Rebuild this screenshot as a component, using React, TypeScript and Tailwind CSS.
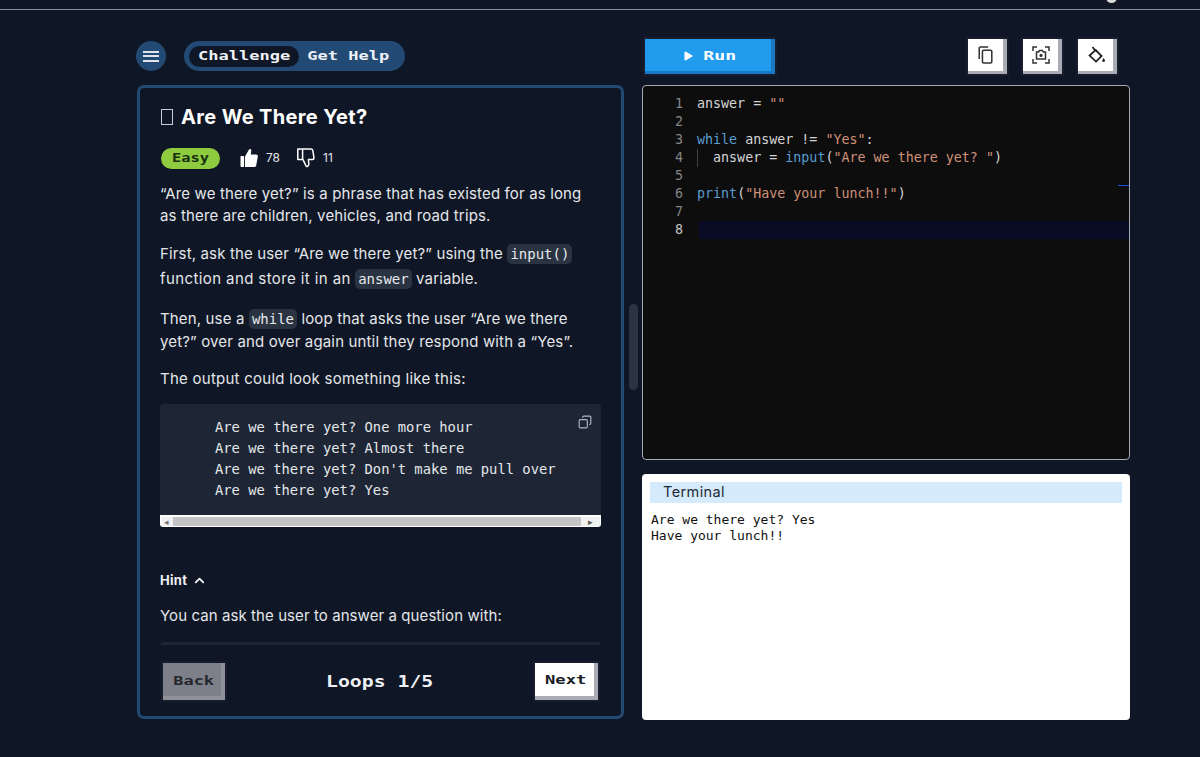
import React from "react";
import { Play, ChevronUp, Copy } from "lucide-react";

const mono = { fontFamily: '"DejaVu Sans Mono", monospace' };
const body = '"Inter", "Open Sans", sans-serif';

function Px({ children, s = "scale-x-[1.31]" }: { children: React.ReactNode; s?: string }) {
  return (
    <span className={"inline-block whitespace-pre font-bold " + s} style={mono}>
      {children}
    </span>
  );
}

function ThumbUp() {
  return (
    <svg width="18" height="20" viewBox="0 0 18 20" fill="#fff">
      <rect x="0.5" y="8" width="3.6" height="11" rx="0.8" />
      <path d="M5 8.5 L9 1.6 C9.4 .6 11.4 .9 11.3 2.7 L10.8 6.6 L16.2 6.6 C17.5 6.6 18 7.6 17.8 8.6 L16.2 17.6 C16 18.6 15.4 19 14.4 19 L5 19 Z" />
    </svg>
  );
}
function ThumbDown() {
  return (
    <svg width="18" height="20" viewBox="0 0 18 20" fill="none" stroke="#fff" strokeWidth="1.5" strokeLinejoin="round">
      <path d="M.8 1 L14 1 C15 1 15.6 1.6 15.8 2.4 L17 10 C17 11 16.4 11.6 15.6 11.6 L11.4 11.6 L11.8 16 C11.8 18.4 9.6 19 9 17.8 L6 11.6 L.8 11.6 Z" />
      <path d="M5.6 1 V11.6" />
    </svg>
  );
}
function Code({ children }: { children: React.ReactNode }) {
  return (
    <code className="inline-block rounded-[5px] bg-[#2a3342] px-[3px] text-[14px] leading-[20px] tracking-normal text-[#e6e8ec] font-['DejaVu_Sans_Mono',monospace]">
      {children}
    </code>
  );
}
const Tok = {
  k: (s: string) => <span className="text-[#5a9bd0]">{s}</span>,
  s: (s: string) => <span className="text-[#ce9178]">{s}</span>,
};

const lines: React.ReactNode[] = [
  <>answer = {Tok.s('""')}</>,
  <></>,
  <>{Tok.k("while")} answer != {Tok.s('"Yes"')}:</>,
  <>  answer = {Tok.k("input")}({Tok.s('"Are we there yet? "')})</>,
  <></>,
  <>{Tok.k("print")}({Tok.s('"Have your lunch!!"')})</>,
  <></>,
  <></>,
];

export default function App() {
  return (
    <div className="relative h-[757px] w-[1200px] overflow-hidden bg-[#0f1625] font-['Inter',sans-serif] text-white">
      <div className="relative h-[10px] border-b border-[#8a8f99]">
        <div className="absolute left-[1106px] top-[-8px] h-[11px] w-[11px] rounded-full bg-[#d8d8d8]" />
      </div>

      <div className="flex pl-[136px] pt-[29px]">
        {/* left column */}
        <div className="flex w-[489px] flex-col">
          <div className="flex h-[34px] items-center gap-[18px]">
            <div className="flex h-[30px] w-[30px] items-center justify-center rounded-full bg-[#234a75]">
              <div className="flex w-[16px] flex-col gap-[2.5px]">
                <div className="h-[2px] bg-[#dfe3ea]" />
                <div className="h-[2px] bg-[#dfe3ea]" />
                <div className="h-[2px] bg-[#dfe3ea]" />
              </div>
            </div>
            <div className="flex h-[30px] w-[221px] items-center rounded-full bg-[#234a75] pl-[5px] text-[13px] text-[#eef1f5]">
              <div className="flex h-[21px] w-[110px] items-center justify-center rounded-full bg-[#0f1625]"><Px>Challenge</Px></div>
              <div className="ml-[18px]"><Px>Get Help</Px></div>
            </div>
          </div>

          <div className="ml-[1px] mt-[12px] flex h-[634px] w-[487px] flex-col rounded-[7px] border-[3px] border-[#234a75]">
            <div className="h-[557px] overflow-hidden px-[20px] pt-[15px] text-[15px] tracking-[0.15px] text-[#e4e6ea]" style={{ fontFamily: body }}>
              <div className="flex h-[28px] items-center gap-[8px] text-[20px] font-bold tracking-[0.35px] text-white">
                <div className="ml-[1px] h-[16px] w-[12px] border border-[#c8ccd4]" />
                Are We There Yet?
              </div>
              <div className="mt-[16px] flex h-[22px] items-center tracking-normal">
                <div className="ml-[1px] flex h-[21px] w-[59px] items-center justify-center rounded-full bg-[#8ecb3f] text-[12px] text-[#17300d]">
                  <Px s="scale-x-[1.28]">Easy</Px>
                </div>
                <div className="ml-[20px]"><ThumbUp /></div>
                <span className="ml-[8px] text-[12px]">78</span>
                <div className="ml-[17px]"><ThumbDown /></div>
                <span className="ml-[8px] text-[12px]">11</span>
              </div>
              <p className="mt-[14px] leading-[22px]">“Are we there yet?” is a phrase that has existed for as long as there are children, vehicles, and road trips.</p>
              <p className="mt-[14px] leading-[25px]">First, ask the user “Are we there yet?” using the <Code>input()</Code> <span className="tracking-[0.4px]">function and store it in an</span> <Code>answer</Code> variable.</p>
              <p className="mt-[16px] leading-[23px]">Then, use a <Code>while</Code> loop that asks the user “Are we there yet?” over and over again until they respond with a “Yes”.</p>
              <p className="mt-[15px] leading-[22px] tracking-[0.25px]">The output could look something like this:</p>
              <div className="mt-[14px] w-[441px]">
                <div className="relative h-[111px] rounded-t-[4px] bg-[#1e2635] pl-[55px] pt-[13px] text-[13.8px] leading-[21px] tracking-normal text-[#e4e6ea] font-['DejaVu_Sans_Mono',monospace]">
                  <Copy className="absolute right-[9px] top-[11px] h-[14px] w-[14px] -scale-x-100 text-[#aeb4bf]" />
                  <div>Are we there yet? One more hour</div>
                  <div>Are we there yet? Almost there</div>
                  <div>Are we there yet? Don't make me pull over</div>
                  <div>Are we there yet? Yes</div>
                </div>
                <div className="flex h-[12px] items-center rounded-b-[3px] bg-white px-[1px]">
                  <div className="flex h-[9px] w-[12px] items-center justify-center bg-[#f0f0f0] text-[9px] leading-none text-[#777]">◂</div>
                  <div className="h-[9px] w-[408px] bg-[#c4c4c4]" />
                  <div className="flex h-[9px] flex-1 items-center justify-center bg-[#f0f0f0] text-[9px] leading-none text-[#555]">▸</div>
                </div>
              </div>
              <div className="mt-[44px] flex items-center gap-[5px] text-[13px] font-bold tracking-[0.3px] text-[#eef0f3]">
                Hint <ChevronUp className="h-[15px] w-[15px]" strokeWidth={3} />
              </div>
              <p className="mt-[14px] leading-[22px] tracking-[0.08px]">You can ask the user to answer a question with:</p>
              <div className="mt-[15px] h-[10px] w-[441px] rounded-t-[4px] bg-[#1e2635]" />
            </div>
            <div className="flex flex-1 items-start justify-between px-[23px] pt-[18px]">
              <div className="flex h-[37px] w-[62px] items-center justify-center border-b-[4px] border-r-[4px] border-[#8f9098] bg-[#7e8089] pl-[4px] pt-[3px] text-[13px] text-[#24272e] shadow-[0_0_0_2px_#171d2c]">
                <Px s="scale-x-[1.3]">Back</Px>
              </div>
              <div className="mt-[8px] text-[15px] text-[#eef0f3]"><Px s="scale-x-[1.32]">Loops 1/5</Px></div>
              <div className="flex h-[37px] w-[63px] items-center justify-center border-b-[4px] border-r-[4px] border-[#a9acb4] bg-white pl-[2px] text-[13px] text-[#1a1d26] shadow-[0_0_0_2px_#171d2c]">
                <Px s="scale-x-[1.32]">Next</Px>
              </div>
            </div>
          </div>
        </div>

        {/* scrollbar thumb lies over the gutter */}
        <div className="absolute left-[629px] top-[304px] h-[86px] w-[9px] rounded-full bg-[#2c3444]" />

        {/* right column */}
        <div className="ml-[17px] flex w-[488px] flex-col">
          <div className="flex h-[35px] items-start">
            <div className="ml-[3px] flex h-[35px] w-[130px] items-center border-b-[3px] border-r-[4px] border-[#1878c4] bg-[#219bee] pl-[37px] pt-[2px] text-[13px] shadow-[0_0_0_2px_#171d2c]">
              <Play className="h-[12px] w-[12px] fill-white" strokeWidth={0} />
              <span className="ml-[14px]"><Px s="scale-x-[1.4]">Run</Px></span>
            </div>
            <div className="ml-auto mr-[13px] flex gap-[16px]">
              {[0, 1, 2].map((i) => (
                <div key={i} className="flex h-[35px] w-[39px] items-center justify-center border-b-[3px] border-r-[4px] border-[#a9acb4] bg-white shadow-[0_0_0_2px_#171d2c]">
                  {i === 0 && (
                    <svg width="15" height="18" viewBox="0 0 16 20" fill="none" stroke="#333" strokeWidth="1.7">
                      <path d="M11 1 H2.6 A1.6 1.6 0 0 0 1 2.6 V14.5" />
                      <rect x="4.6" y="4.6" width="10.4" height="14.4" rx="1.4" />
                    </svg>
                  )}
                  {i === 1 && (
                    <svg width="18" height="18" viewBox="0 0 18 18" fill="none" stroke="#333" strokeWidth="1.5">
                      <path d="M1 5 V1 H5 M13 1 H17 V5 M1 13 V17 H5 M13 17 H17 V13" />
                      <path d="M4.5 6 H6.6 L7.6 4.6 H10.4 L11.4 6 H13.5 V13 H4.5 Z" />
                      <circle cx="9" cy="9.4" r="1.6" fill="#333" stroke="none" />
                    </svg>
                  )}
                  {i === 2 && (
                    <svg width="18" height="18" viewBox="0 0 18 18" fill="none" stroke="#222" strokeWidth="1.8" className="ml-[2px]">
                      <path d="M4.5 1 L7 4.2 M7.6 4 L13.6 10 L8 15.6 L1.6 9.6 Z" />
                      <path d="M15.6 12 C14.6 13.4 14.2 14.2 14.2 15 A1.5 1.5 0 0 0 17 15 C17 14.2 16.6 13.4 15.6 12 Z" fill="#222" stroke="none" />
                    </svg>
                  )}
                </div>
              ))}
            </div>
          </div>

          <div className="relative mt-[11px] h-[375px] rounded-[4px] border border-[#a5a9b0] bg-[#0d0d0d] pt-[9px] text-[13.33px] leading-[18px] font-['DejaVu_Sans_Mono',monospace]">
            {lines.map((l, i) => (
              <div key={i} className="flex h-[18px]">
                <div className={"w-[40px] text-right " + (i === 7 ? "text-[#c6c6c6]" : "text-[#858585]")}>{i + 1}</div>
                <div className={"flex-1 whitespace-pre text-[#d4d4d4] " + (i === 7 ? "ml-[16px] bg-[#0a0c26]" : "ml-[14px]")}>{l}</div>
              </div>
            ))}
            <div className="absolute left-[54px] top-[63px] h-[18px] w-px bg-[#404040]" />
            <div className="absolute right-0 top-[99px] h-[1px] w-[11px] bg-[#1e4fe0]" />
          </div>

          <div className="mt-[14px] h-[246px] rounded-[4px] bg-white px-[8px] pt-[8px]">
            <div className="flex h-[21px] items-center bg-[#d5eafb] pb-[2px] pl-[13px] text-[14.5px] tracking-[0.4px] text-[#1f2937]" style={{ fontFamily: body }}>Terminal</div>
            <div className="ml-[1px] mt-[9px] text-[13px] leading-[16px] text-[#111] font-['DejaVu_Sans_Mono',monospace]">
              <div>Are we there yet? Yes</div>
              <div>Have your lunch!!</div>
            </div>
          </div>
        </div>
      </div>
    </div>
  );
}
